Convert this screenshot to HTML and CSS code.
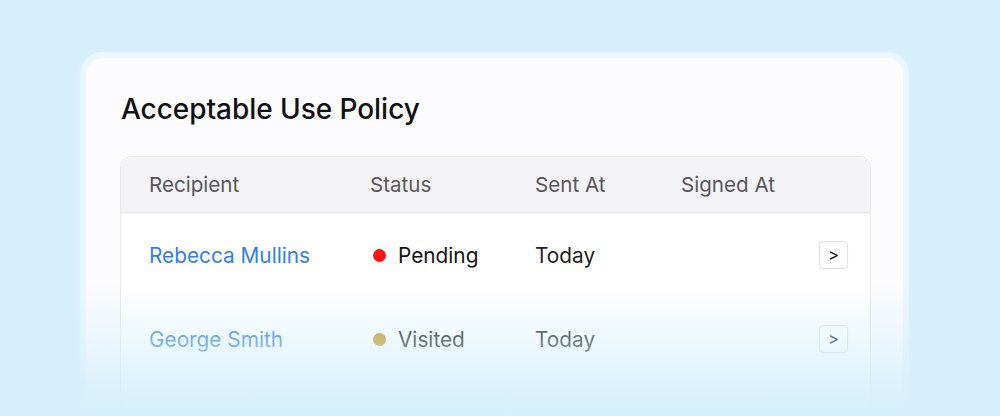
FILE: index.html
```html
<!DOCTYPE html>
<html lang="en">
<head>
<meta charset="utf-8">
<title>Acceptable Use Policy</title>
<link rel="stylesheet" href="styles.css">
</head>
<body>
<div class="stage">
  <section class="card">
    <h1 class="title">Acceptable Use Policy</h1>
    <div class="table">
      <div class="row head">
        <div class="cell">Recipient</div>
        <div class="cell">Status</div>
        <div class="cell">Sent At</div>
        <div class="cell">Signed At</div>
        <div class="cell"></div>
      </div>
      <div class="row">
        <div class="cell name">Rebecca Mullins</div>
        <div class="cell status"><span class="dot dot-red"></span>Pending</div>
        <div class="cell">Today</div>
        <div class="cell"></div>
        <div class="cell"><span class="go">&gt;</span></div>
      </div>
      <div class="row">
        <div class="cell name">George Smith</div>
        <div class="cell status"><span class="dot dot-gold"></span>Visited</div>
        <div class="cell">Today</div>
        <div class="cell"></div>
        <div class="cell"><span class="go">&gt;</span></div>
      </div>
    </div>
  </section>
  <div class="fade"></div>
</div>
</body>
</html>
```

FILE: styles.css
```css
html, body {
  margin: 0;
  padding: 0;
}
body {
  background: #d5effc;
  font-family: Inter, "Noto Sans", sans-serif;
  width: 1000px;
  height: 416px;
  overflow: hidden;
}
.stage {
  position: relative;
  width: 1000px;
  height: 416px;
  overflow: hidden;
  padding: 58px 0 0 86px;
  box-sizing: border-box;
}
.card {
  width: 817px;
  height: 420px;
  box-sizing: border-box;
  background: #fcfbfd;
  border-radius: 16px;
  box-shadow: 0 0 0 6px rgba(255, 255, 255, 0.4), 0 0 10px 6px rgba(255, 255, 255, 0.25);
  padding: 31px 34px 0 35px;
}
.title {
  margin: 0;
  font-size: 28px;
  line-height: 40px;
  font-weight: 500;
  color: #111114;
  letter-spacing: -0.05px;
}
.table {
  margin-top: 27px;
  width: 749px;
  margin-left: -1px;
  border: 1px solid #e9e8eb;
  border-bottom: none;
  border-radius: 12px 12px 0 0;
  overflow: hidden;
  background: #ffffff;
  height: 260px;
}
.row {
  display: grid;
  grid-template-columns: 221px 165px 146px 1fr 29px;
  align-items: center;
  padding: 0 22px 0 28px;
  height: 84px;
  font-size: 20.8px;
  color: #1f1f22;
}
.row.head {
  height: 55px;
  background: #f3f2f4;
  border-bottom: 1px solid #e6e5e8;
  color: #58585c;
  font-size: 20.6px;
}
.name {
  color: #2f7ff0;
}
.status {
  display: flex;
  align-items: center;
  color: #141416;
}
.dot {
  width: 13px;
  height: 13px;
  border-radius: 50%;
  margin: 0 12px 0 3px;
  flex: none;
}
.dot-red { background: #ff1414; }
.dot-gold { background: #c8901a; }
.go {
  display: flex;
  align-items: center;
  justify-content: center;
  width: 29px;
  height: 28px;
  box-sizing: border-box;
  border: 1px solid #e1e1e5;
  border-radius: 4px;
  background: #ffffff;
  box-shadow: 0 1px 2px rgba(0, 0, 0, 0.04);
  font-size: 17px;
  color: #1d1d20;
}
.fade {
  position: absolute;
  left: 0;
  right: 0;
  top: 285px;
  bottom: 0;
  background: linear-gradient(to bottom, rgba(213, 239, 252, 0) 0%, rgba(213, 239, 252, 0.4) 40%, rgba(213, 239, 252, 0.85) 78%, rgba(213, 239, 252, 1) 100%);
  pointer-events: none;
}
```
